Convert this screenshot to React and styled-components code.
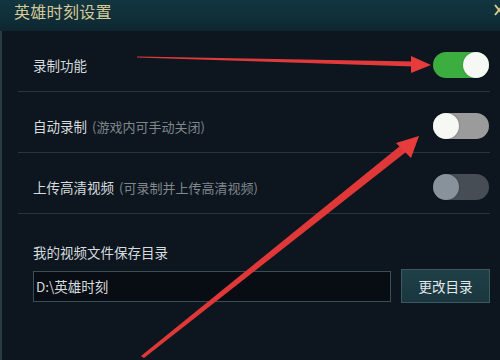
import React from "react";
import styled, { createGlobalStyle } from "styled-components";

const Global = createGlobalStyle`
  html, body { margin: 0; padding: 0; background: #0d161e; }
  body { font-family: "Noto Sans CJK SC", "Noto Sans", sans-serif; }
`;

const Window = styled.div`
  position: relative;
  width: 500px;
  height: 360px;
  overflow: hidden;
  background: #0d161e;
  display: flex;
  flex-direction: column;
`;

const Header = styled.div`
  height: 31px;
  flex: none;
  box-sizing: border-box;
  padding: 0 0 0 14px;
  background: linear-gradient(180deg, #123640 0%, #0f2c36 70%, #0e2630 100%);
  display: flex;
  align-items: flex-start;
`;

const Title = styled.div`
  font-size: 16px;
  line-height: 22px;
  color: #d6ca96;
  letter-spacing: 0.3px;
`;

const Close = styled.svg`
  position: absolute;
  right: -4px;
  top: 4px;
`;

const Body = styled.div`
  flex: 1;
  border-left: 2px solid #2a3b44;
  display: flex;
  flex-direction: column;
  padding: 0 10px 0 16px;
`;

const Row = styled.div`
  height: 61px;
  box-sizing: border-box;
  padding: 8px 1px 0 15px;
  border-bottom: 1px solid #28353e;
  display: flex;
  align-items: center;
  justify-content: space-between;
`;

const Label = styled.div`
  font-size: 13.5px;
  color: #d6dbdf;
  display: flex;
  align-items: baseline;
  gap: 5px;
`;

const Hint = styled.span`
  font-size: 13px;
  color: #80878d;
`;

const Track = styled.div`
  width: 56px;
  height: 26px;
  border-radius: 13px;
  box-sizing: border-box;
  display: flex;
  justify-content: ${(p) => (p.on ? "flex-end" : "flex-start")};
  align-items: center;
  background: ${(p) => (p.on ? "#3cae3f" : p.disabled ? "#474d55" : "#9b9b9b")};
`;

const Knob = styled.div`
  width: 26px;
  height: 26px;
  border-radius: 50%;
  background: ${(p) => (p.disabled ? "#88929b" : "#f6f8f4")};
  box-shadow: 0 0 2px rgba(0, 0, 0, 0.3);
`;

const DirSection = styled.div`
  padding: 28px 0 0 15px;
  display: flex;
  flex-direction: column;
  gap: 7px;
`;

const DirRow = styled.div`
  display: flex;
  align-items: center;
  gap: 10px;
`;

const PathInput = styled.div`
  width: 359px;
  height: 31px;
  box-sizing: border-box;
  border: 1px solid #3b4d55;
  background: #070d13;
  color: #d6dbdf;
  font-size: 13.5px;
  display: flex;
  align-items: center;
  padding-left: 2px;
`;

const Button = styled.button`
  width: 89px;
  height: 34px;
  box-sizing: border-box;
  border: 1px solid #3d5a60;
  background: linear-gradient(180deg, #1f4048 0%, #1a363e 100%);
  color: #e4e8ea;
  font-family: inherit;
  font-size: 13.5px;
  padding: 0;
`;

const Overlay = styled.svg`
  position: absolute;
  left: 0;
  top: 0;
  pointer-events: none;
`;

function Toggle({ on, disabled }) {
  return (
    <Track on={on} disabled={disabled}>
      <Knob disabled={disabled} />
    </Track>
  );
}

export default function App() {
  return (
    <>
      <Global />
      <Window>
        <Header>
          <Title>英雄时刻设置</Title>
        </Header>
        <Close width="10" height="12" viewBox="0 0 10 12">
          <path d="M1 1 L9 11 M9 1 L1 11" stroke="#d9c98a" strokeWidth="2" />
        </Close>
        <Body>
          <Row>
            <Label>录制功能</Label>
            <Toggle on />
          </Row>
          <Row>
            <Label>
              自动录制<Hint>(游戏内可手动关闭)</Hint>
            </Label>
            <Toggle />
          </Row>
          <Row>
            <Label>
              上传高清视频<Hint>(可录制并上传高清视频)</Hint>
            </Label>
            <Toggle disabled />
          </Row>
          <DirSection>
            <Label>我的视频文件保存目录</Label>
            <DirRow>
              <PathInput>D:\英雄时刻</PathInput>
              <Button>更改目录</Button>
            </DirRow>
          </DirSection>
        </Body>
        <Overlay width="500" height="360" viewBox="0 0 500 360">
          <polygon
            points="137,56.6 414,61.5 414,66.5 137,57.6"
            fill="#e23a3a"
          />
          <polygon points="411,56 431,65 411,73" fill="#e83c3c" />
          <polygon
            points="141,356 400,146 406,152 144,358"
            fill="#e03838"
          />
          <polygon points="396,143 419,136 411,158" fill="#e83c3c" />
        </Overlay>
      </Window>
    </>
  );
}
